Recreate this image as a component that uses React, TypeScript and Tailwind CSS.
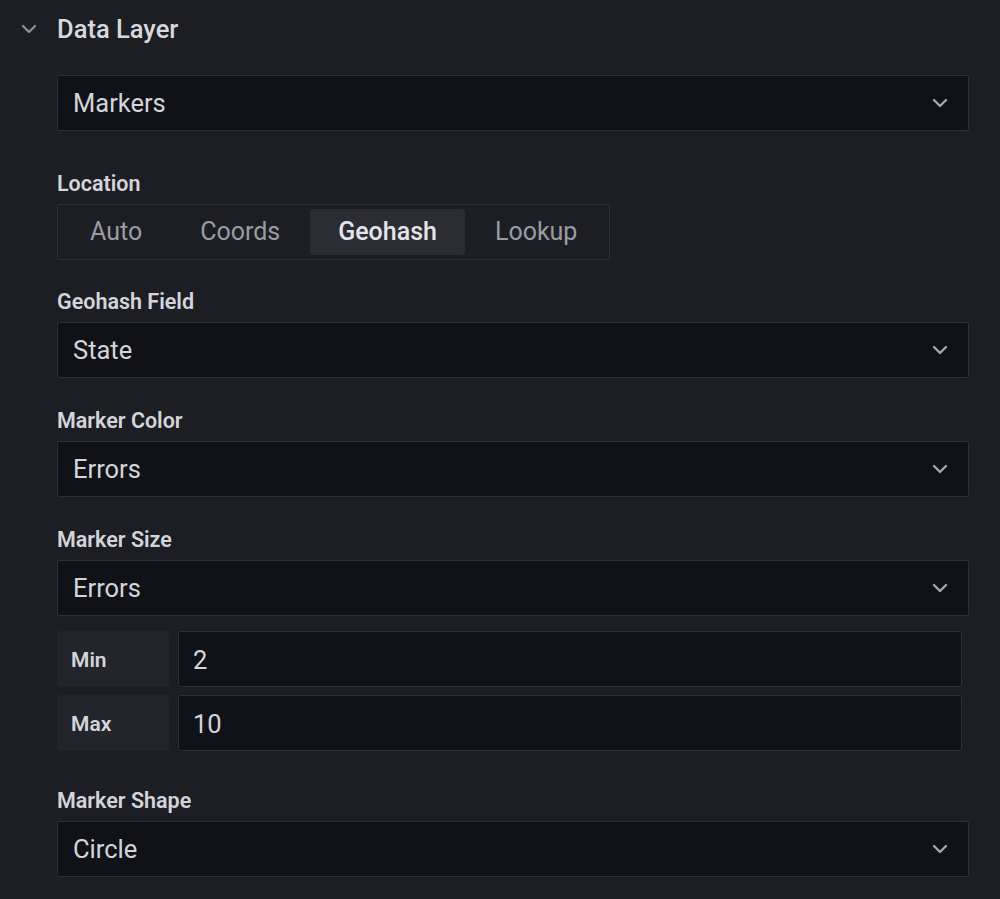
import React from "react";

const Chevron = ({ className = "" }: { className?: string }) => (
  <svg width="16" height="10" viewBox="0 0 16 10" className={className}>
    <polyline points="2,2 8,8 14,2" fill="none" stroke="currentColor" strokeWidth="2.4" strokeLinecap="round" strokeLinejoin="round" />
  </svg>
);

const Select = ({ value }: { value: string }) => (
  <div className="h-[56px] flex items-center justify-between bg-[#111217] border border-[#2e3037] rounded-[2px] pl-[15px] pr-[20px]">
    <span className="text-[25.5px] text-[#d4d5db]">{value}</span>
    <Chevron className="text-[#a5a7ae]" />
  </div>
);

const Label = ({ text }: { text: string }) => (
  <div className="h-[28px] flex items-center pt-[2px] text-[21.5px] font-semibold text-[#d4d5db] mb-[7px]">{text}</div>
);

export default function App() {
  return (
    <div
      className="w-[1000px] h-[899px] bg-[#1c1e23] overflow-hidden"
      style={{ fontFamily: "Roboto, 'Liberation Sans', sans-serif" }}
    >
      <div className="h-[56px] flex items-center pl-[21px] pt-[2px]">
        <Chevron className="text-[#8b8d95]" />
        <span className="ml-[20px] text-[25.5px] font-medium text-[#d8d9de]">Data Layer</span>
      </div>
      <div className="pl-[57px] pr-[31px] pt-[19px]">
        <Select value="Markers" />

        <div className="mt-[38px]">
          <Label text="Location" />
          <div className="inline-flex h-[56px] items-center gap-[2px] border border-[#2e3037] rounded-[2px] px-[4px] bg-[#1c1e23]">
            {["Auto", "Coords", "Geohash", "Lookup"].map((o) => (
              <div
                key={o}
                className={
                  o === "Geohash"
                    ? "h-[46px] flex items-center px-[28px] rounded-[3px] bg-[#2b2d33] text-[25px] font-medium text-[#e4e5ea]"
                    : "h-[46px] flex items-center px-[28px] text-[25px] text-[#9a9ca4]"
                }
              >
                {o}
              </div>
            ))}
          </div>
        </div>

        <div className="mt-[27px]">
          <Label text="Geohash Field" />
          <Select value="State" />
        </div>

        <div className="mt-[28px]">
          <Label text="Marker Color" />
          <Select value="Errors" />
        </div>

        <div className="mt-[28px]">
          <Label text="Marker Size" />
          <Select value="Errors" />
        </div>

        <div className="mt-[15px] pr-[7px] flex flex-col gap-[8px]">
          {[
            ["Min", "2"],
            ["Max", "10"],
          ].map(([l, v]) => (
            <div key={l} className="flex gap-[9px] h-[56px]">
              <div className="w-[112px] flex items-center pl-[14px] pt-[3px] bg-[#22252b] rounded-[4px] text-[21px] font-semibold text-[#d4d5db]">
                {l}
              </div>
              <div className="flex-1 flex items-center bg-[#111217] border border-[#2e3037] rounded-[2px] pl-[14px] pt-[2px] text-[25.5px] text-[#d4d5db]">
                {v}
              </div>
            </div>
          ))}
        </div>

        <div className="mt-[35px]">
          <Label text="Marker Shape" />
          <Select value="Circle" />
        </div>
      </div>
    </div>
  );
}
